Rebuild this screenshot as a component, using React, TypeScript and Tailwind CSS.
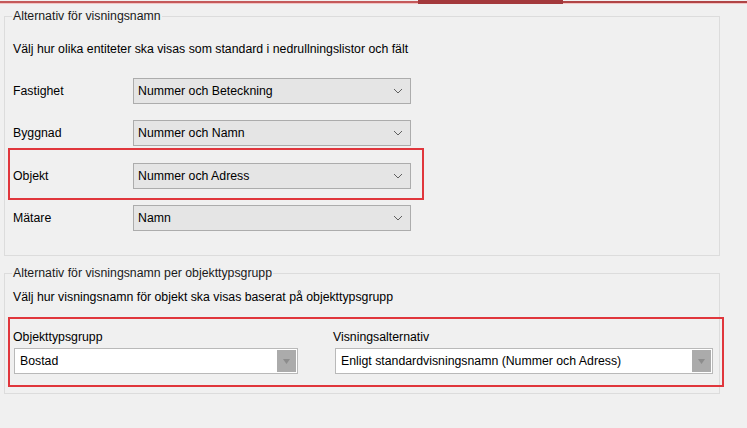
import React from 'react';

const font = { fontFamily: '"Liberation Sans", Arial, sans-serif' };

function Chevron() {
  return (
    <svg width="10" height="6" viewBox="0 0 10 6" className="mr-[7px]">
      <path d="M1 1 L5 5 L9 1" fill="none" stroke="#606060" strokeWidth="1" />
    </svg>
  );
}

function Combo({ value }: { value: string }) {
  return (
    <div className="flex h-[26px] w-[278px] items-center justify-between border border-[#acacac] bg-[#e5e5e5] pl-[4px] text-[12.3px] text-black">
      <span>{value}</span>
      <Chevron />
    </div>
  );
}

function Row({ label, value }: { label: string; value: string }) {
  return (
    <div className="flex h-[26px] items-center">
      <span className="w-[120px] text-[12.3px] text-black">{label}</span>
      <Combo value={value} />
    </div>
  );
}

function FlatCombo({ value, width }: { value: string; width: string }) {
  return (
    <div className={`flex h-[26px] items-stretch border border-[#b9b9b9] bg-white p-[1px] ${width}`}>
      <div className="flex flex-1 items-center pl-[4px] text-[12.3px] text-black">{value}</div>
      <div className="flex w-[19px] items-center justify-center bg-[#ababab]">
        <svg width="7" height="5" viewBox="0 0 7 5">
          <path d="M0 0 H7 L3.5 5 Z" fill="#8c8c8c" />
        </svg>
      </div>
    </div>
  );
}

export default function App() {
  return (
    <div className="h-[428px] w-[747px] overflow-hidden bg-[#f0f0f0]" style={font}>
      {/* tab strip bottom */}
      <div className="flex h-[4px]">
        <div className="mt-[1px] h-[3px] w-[418px] border-b border-[#f2c4c4] bg-[#c4595a]" />
        <div className="h-[4px] w-[145px] bg-[#a3383b]" />
        <div className="mt-[1px] h-[3px] flex-1 border-b border-[#f2c4c4] bg-[#b04445]" />
      </div>

      {/* group 1 */}
      <div className="ml-[4px] mt-[12px] h-[240px] w-[716px] border border-[#dcdcdc]">
        <div className="-mt-[9px] ml-[7px] w-fit bg-[#f0f0f0] px-[1px] text-[12.3px] leading-[16px] text-[#1a1a1a]">
          Alternativ för visningsnamn
        </div>
        <div className="pl-[8px]">
          <p className="mt-[17px] text-[12.3px] leading-[16px] text-black">
            Välj hur olika entiteter ska visas som standard i nedrullningslistor och fält
          </p>
          <div className="mt-[21px]">
            <Row label="Fastighet" value="Nummer och Beteckning" />
          </div>
          <div className="mt-[16px]">
            <Row label="Byggnad" value="Nummer och Namn" />
          </div>
        </div>
        <div className="ml-[3px] mt-[2px] w-[416px] border-2 border-[#e0363c] pb-[9px] pl-[3px] pt-[13px]">
          <Row label="Objekt" value="Nummer och Adress" />
        </div>
        <div className="mt-[5px] pl-[8px]">
          <Row label="Mätare" value="Namn" />
        </div>
      </div>

      {/* group 2 */}
      <div className="ml-[4px] mt-[17px] h-[121px] w-[716px] border border-[#dcdcdc]">
        <div className="-mt-[9px] ml-[7px] w-fit bg-[#f0f0f0] px-[1px] text-[12.3px] leading-[16px] text-[#1a1a1a]">
          Alternativ för visningsnamn per objekttypsgrupp
        </div>
        <p className="mt-[8px] pl-[8px] text-[12.3px] leading-[16px] text-black">
          Välj hur visningsnamn för objekt ska visas baserat på objekttypsgrupp
        </p>
        <div className="ml-[3px] mt-[12px] flex w-[716px] border-2 border-[#e0363c] pb-[11px] pl-[3px] pt-[10px]">
          <div className="w-[320px]">
            <div className="text-[12.3px] leading-[16px] text-black">Objekttypsgrupp</div>
            <div className="ml-[1px] mt-[3px]">
              <FlatCombo value="Bostad" width="w-[284px]" />
            </div>
          </div>
          <div>
            <div className="text-[12.3px] leading-[16px] text-black">Visningsalternativ</div>
            <div className="ml-[2px] mt-[3px]">
              <FlatCombo value="Enligt standardvisningsnamn (Nummer och Adress)" width="w-[378px]" />
            </div>
          </div>
        </div>
      </div>
    </div>
  );
}
